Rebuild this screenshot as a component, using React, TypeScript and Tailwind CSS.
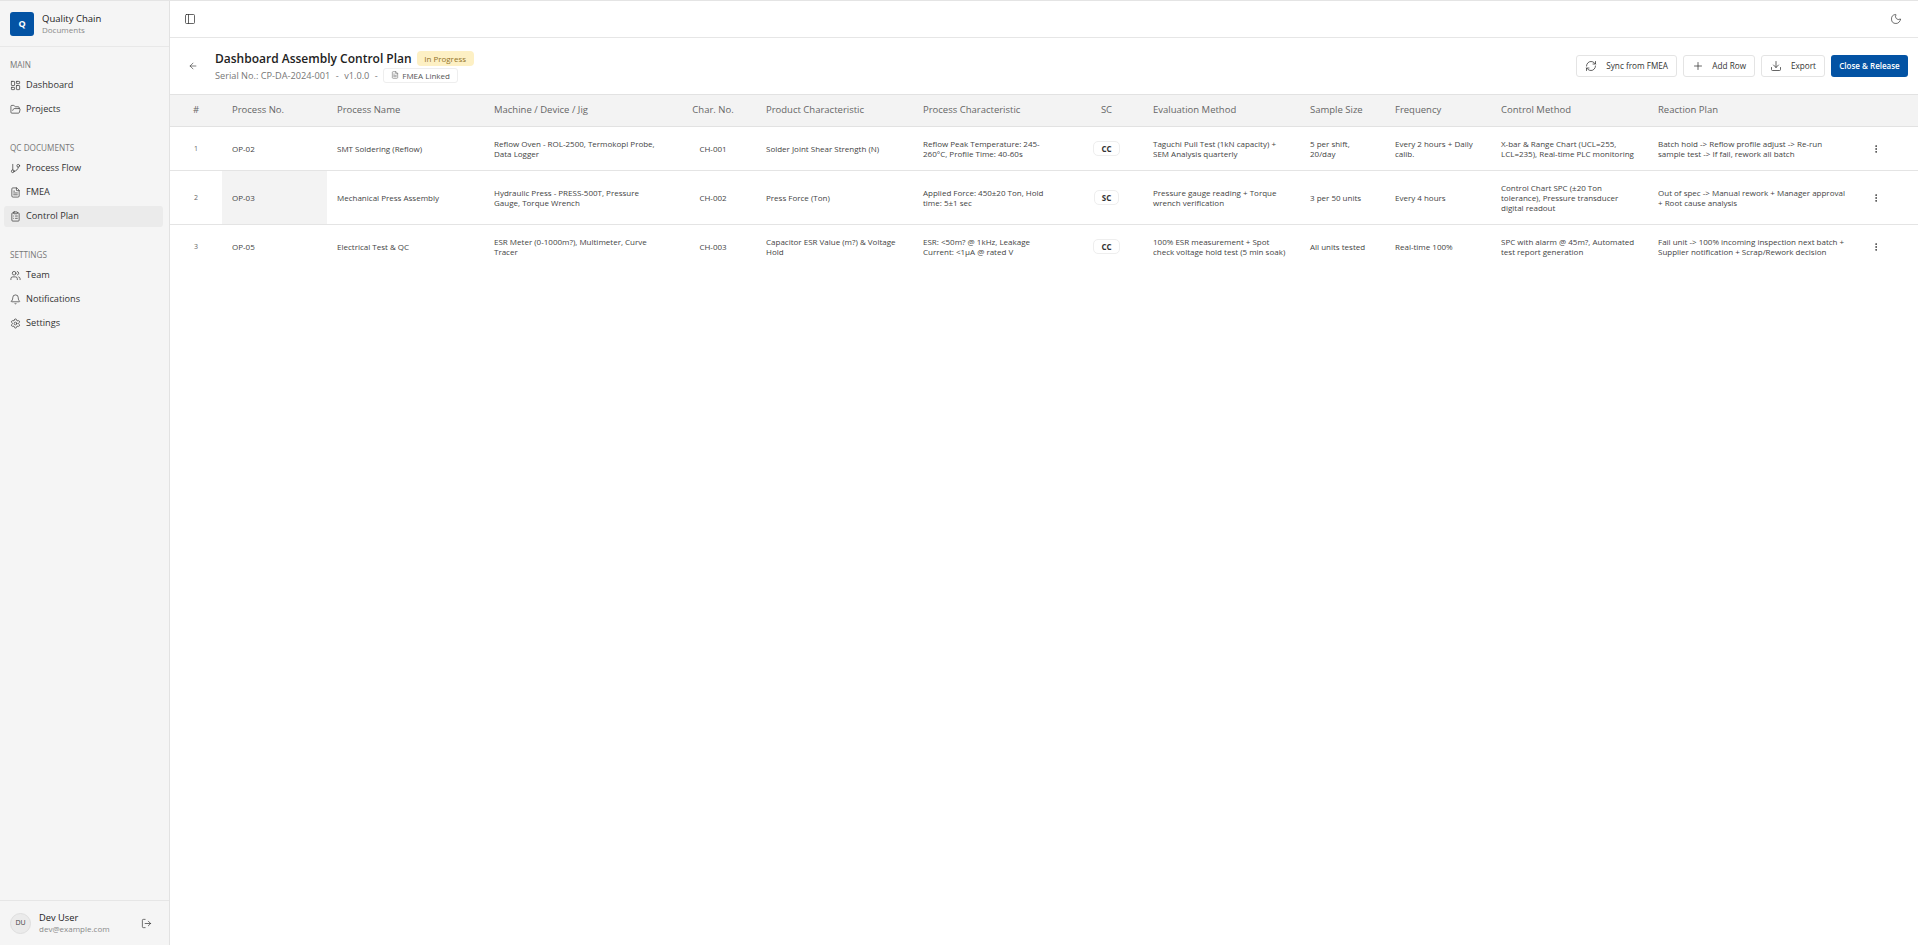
import {
  ArrowLeft,
  Bell,
  ClipboardList,
  Download,
  EllipsisVertical,
  FileText,
  FolderOpen,
  GitBranch,
  LayoutDashboard,
  LogOut,
  Moon,
  PanelLeft,
  Plus,
  RefreshCw,
  Settings,
  Users,
} from "lucide-react";
import type { ComponentType, ReactNode } from "react";

interface NavItem {
  label: string;
  icon: ComponentType<{ size?: number; strokeWidth?: number; className?: string }>;
  active?: boolean;
}

const navGroups: { title: string; items: NavItem[] }[] = [
  {
    title: "MAIN",
    items: [
      { label: "Dashboard", icon: LayoutDashboard },
      { label: "Projects", icon: FolderOpen },
    ],
  },
  {
    title: "QC DOCUMENTS",
    items: [
      { label: "Process Flow", icon: GitBranch },
      { label: "FMEA", icon: FileText },
      { label: "Control Plan", icon: ClipboardList, active: true },
    ],
  },
  {
    title: "SETTINGS",
    items: [
      { label: "Team", icon: Users },
      { label: "Notifications", icon: Bell },
      { label: "Settings", icon: Settings },
    ],
  },
];

const headers = [
  { label: "#", className: "w-[52px] text-center" },
  { label: "Process No.", className: "w-[105px] text-left" },
  { label: "Process Name", className: "w-[157px] text-left" },
  { label: "Machine / Device / Jig", className: "w-[186px] text-left" },
  { label: "Char. No.", className: "w-[86px] text-center" },
  { label: "Product Characteristic", className: "w-[157px] text-left" },
  { label: "Process Characteristic", className: "w-[157px] text-left" },
  { label: "SC", className: "w-[73px] text-center" },
  { label: "Evaluation Method", className: "w-[157px] text-left" },
  { label: "Sample Size", className: "w-[85px] text-left" },
  { label: "Frequency", className: "w-[106px] text-left" },
  { label: "Control Method", className: "w-[157px] text-left" },
  { label: "Reaction Plan", className: "w-[212px] text-left" },
  { label: "", className: "" },
];

const rows = [
  {
    no: "OP-02",
    name: "SMT Soldering (Reflow)",
    machine: "Reflow Oven - ROL-2500, Termokopl Probe, Data Logger",
    char: "CH-001",
    product: "Solder Joint Shear Strength (N)",
    process: "Reflow Peak Temperature: 245-260°C, Profile Time: 40-60s",
    sc: "CC",
    evaluation: "Taguchi Pull Test (1kN capacity) + SEM Analysis quarterly",
    sample: "5 per shift, 20/day",
    frequency: "Every 2 hours + Daily calib.",
    control: "X-bar & Range Chart (UCL=255, LCL=235), Real-time PLC monitoring",
    reaction: "Batch hold -> Reflow profile adjust -> Re-run sample test -> If fail, rework all batch",
  },
  {
    no: "OP-03",
    name: "Mechanical Press Assembly",
    machine: "Hydraulic Press - PRESS-500T, Pressure Gauge, Torque Wrench",
    char: "CH-002",
    product: "Press Force (Ton)",
    process: "Applied Force: 450±20 Ton, Hold time: 5±1 sec",
    sc: "SC",
    evaluation: "Pressure gauge reading + Torque wrench verification",
    sample: "3 per 50 units",
    frequency: "Every 4 hours",
    control: "Control Chart SPC (±20 Ton tolerance), Pressure transducer digital readout",
    reaction: "Out of spec -> Manual rework + Manager approval + Root cause analysis",
  },
  {
    no: "OP-05",
    name: "Electrical Test & QC",
    machine: "ESR Meter (0-1000m?), Multimeter, Curve Tracer",
    char: "CH-003",
    product: "Capacitor ESR Value (m?) & Voltage Hold",
    process: "ESR: <50m? @ 1kHz, Leakage Current: <1µA @ rated V",
    sc: "CC",
    evaluation: "100% ESR measurement + Spot check voltage hold test (5 min soak)",
    sample: "All units tested",
    frequency: "Real-time 100%",
    control: "SPC with alarm @ 45m?, Automated test report generation",
    reaction: "Fail unit -> 100% incoming inspection next batch + Supplier notification + Scrap/Rework decision",
  },
];

function OutlineButton({ children, className }: { children: ReactNode; className: string }) {
  return (
    <button
      className={`flex h-[22px] items-center justify-between rounded-[3px] border border-[#e4e4e4] bg-white px-[8px] text-[8.2px] font-medium text-[#333] ${className}`}
    >
      {children}
    </button>
  );
}

function Sidebar() {
  return (
    <aside className="flex h-full w-[170px] shrink-0 flex-col border-r border-[#e2e2e2] bg-[#f5f5f5]">
      <div className="flex h-[46px] shrink-0 items-center gap-2 border-b border-[#e8e8e8] px-[10px]">
        <div className="flex h-6 w-6 items-center justify-center rounded-[3px] bg-[#0353a4] text-[9px] font-bold text-white">
          Q
        </div>
        <div className="flex flex-col">
          <span className="text-[9.5px] leading-[12px] font-medium text-[#222]">Quality Chain</span>
          <span className="text-[8px] leading-[10px] text-[#8a8a8a]">Documents</span>
        </div>
      </div>
      <nav className="flex flex-1 flex-col pt-[1px]">
        {navGroups.map((group) => (
          <div key={group.title} className="pt-[10px] pb-[11.5px]">
            <div className="px-[10px] pt-[1px] pb-[3.5px] text-[8.2px] leading-[12px] font-medium text-[#777]">
              {group.title}
            </div>
            <div className="flex flex-col gap-[3px] pr-[6px] pl-1">
              {group.items.map((item) => (
                <div
                  key={item.label}
                  className={`flex h-[21px] items-center gap-[5px] rounded-[3px] px-[6px] text-[9.2px] text-[#333] ${
                    item.active ? "bg-[#ebebeb] font-medium" : ""
                  }`}
                >
                  <item.icon size={11} strokeWidth={1.5} className="shrink-0 text-[#333]" />
                  {item.label}
                </div>
              ))}
            </div>
          </div>
        ))}
      </nav>
      <div className="flex h-[45px] shrink-0 items-center border-t border-[#e6e6e6] px-[10px]">
        <div className="flex h-[21px] w-[21px] items-center justify-center rounded-full border border-[#dedede] bg-[#ebebeb] text-[7px] font-medium text-[#444]">
          DU
        </div>
        <div className="ml-2 flex flex-1 flex-col">
          <span className="text-[9.3px] leading-[12px] font-medium text-[#222]">Dev User</span>
          <span className="text-[8px] leading-[10px] text-[#8a8a8a]">dev@example.com</span>
        </div>
        <LogOut size={11} strokeWidth={1.5} className="mr-[7px] text-[#333]" />
      </div>
    </aside>
  );
}

export default function App() {
  return (
    <div className="flex h-[945px] w-[1918px] overflow-hidden border-t border-[#e4e4e4] bg-white font-['Open_Sans',sans-serif] text-[#333]">
      <Sidebar />
      <main className="flex min-w-0 flex-1 flex-col">
        <div className="flex h-[37px] shrink-0 items-center justify-between border-b border-[#e6e6e6] pr-[16px] pl-[14px]">
          <PanelLeft size={12} strokeWidth={1.5} className="text-[#333]" />
          <Moon size={12} strokeWidth={1.5} className="text-[#444]" />
        </div>

        <div className="flex h-[56px] shrink-0 items-center justify-between pr-[10px] pl-[18px]">
          <div className="flex items-center gap-[17px]">
            <ArrowLeft size={10} strokeWidth={1.5} className="text-[#333]" />
            <div className="flex flex-col">
              <div className="flex items-center gap-[5px]">
                <h1 className="text-[12px] leading-[17px] font-semibold text-[#222]">
                  Dashboard Assembly Control Plan
                </h1>
                <span className="rounded-[4px] bg-[#fdf0c4] px-[7.5px] text-[8px] leading-[15px] font-medium text-[#92742a]">
                  In Progress
                </span>
              </div>
              <div className="mt-[1px] flex items-center gap-[5.5px] text-[9.2px] leading-[15px] text-[#777]">
                <span>Serial No.: CP-DA-2024-001</span>
                <span>-</span>
                <span>v1.0.0</span>
                <span>-</span>
                <span className="flex h-[15px] items-center gap-[3px] rounded-[3px] border border-[#eeeeee] px-[7px] text-[8px] font-medium text-[#555]">
                  <FileText size={8} strokeWidth={1.5} />
                  FMEA Linked
                </span>
              </div>
            </div>
          </div>
          <div className="flex items-center gap-[6px]">
            <OutlineButton className="w-[101px]">
              <RefreshCw size={12} strokeWidth={1.5} />
              Sync from FMEA
            </OutlineButton>
            <OutlineButton className="w-[72px]">
              <Plus size={12} strokeWidth={1.5} />
              Add Row
            </OutlineButton>
            <OutlineButton className="w-[64px]">
              <Download size={12} strokeWidth={1.5} />
              Export
            </OutlineButton>
            <button className="h-[22px] w-[77px] rounded-[3px] bg-[#0353a4] text-[8px] font-semibold text-white">
              Close & Release
            </button>
          </div>
        </div>

        <table className="w-full table-fixed border-collapse">
          <thead>
            <tr className="h-[32px] border-y border-[#e2e2e2] bg-[#f3f3f3]">
              {headers.map((h, i) => (
                <th key={i} className={`px-[10px] text-[9.5px] font-medium text-[#666] ${h.className}`}>
                  {h.label}
                </th>
              ))}
            </tr>
          </thead>
          <tbody className="text-[8px] leading-[10px] text-[#444]">
            {rows.map((row, i) => (
              <tr
                key={row.no}
                className={`border-[#e4e4e4] ${i < 2 ? "border-b" : ""} ${i === 1 ? "h-[54px]" : "h-[44px]"}`}
              >
                <td className="px-[10px] text-center text-[7px] text-[#666]">{i + 1}</td>
                <td className={`px-[10px] ${i === 1 ? "bg-[#f3f3f3]" : ""}`}>{row.no}</td>
                <td className="px-[10px]">{row.name}</td>
                <td className="px-[10px]">{row.machine}</td>
                <td className="px-[10px] text-center">{row.char}</td>
                <td className="px-[10px]">{row.product}</td>
                <td className="px-[10px]">{row.process}</td>
                <td className="px-[10px] text-center">
                  <span className="inline-block rounded-[5px] border border-[#eeeeee] px-[7px] text-[8px] leading-[13px] font-bold text-[#333]">
                    {row.sc}
                  </span>
                </td>
                <td className="px-[10px]">{row.evaluation}</td>
                <td className="px-[10px]">{row.sample}</td>
                <td className="px-[10px]">{row.frequency}</td>
                <td className="px-[10px]">{row.control}</td>
                <td className="px-[10px]">{row.reaction}</td>
                <td className="px-[10px]">
                  <EllipsisVertical size={10} strokeWidth={2} className="ml-[1px] text-[#333]" />
                </td>
              </tr>
            ))}
          </tbody>
        </table>
      </main>
    </div>
  );
}
